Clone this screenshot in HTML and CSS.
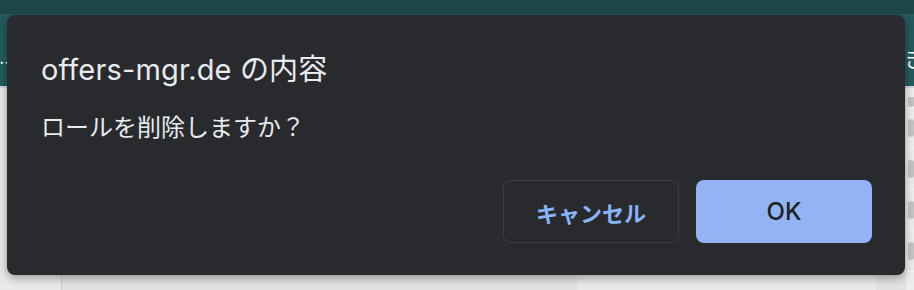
FILE: index.html
```html
<!DOCTYPE html>
<html lang="ja">
<head>
<meta charset="utf-8">
<title>offers-mgr.de の内容</title>
<link rel="stylesheet" href="styles.css">
</head>
<body>
<div class="page">
  <div class="topstrip"></div>
  <div class="header">
    <span class="dots">…</span>
    <span class="hchar">き</span>
  </div>
  <div class="content">
    <div class="leftcol"></div>
    <div class="midcol">
      <div class="panel"></div>
    </div>
    <div class="rightcol">
      <div class="row first"><span class="box"></span></div>
      <div class="row"><span class="box"></span></div>
      <div class="row"><span class="box"></span></div>
      <div class="row"><span class="box"></span></div>
      <div class="row"><span class="box"></span></div>
    </div>
  </div>
</div>

<div class="dialog">
  <div class="title">offers-mgr.de の内容</div>
  <div class="message">ロールを削除しますか？</div>
  <div class="actions">
    <button class="btn cancel">キャンセル</button>
    <button class="btn ok">OK</button>
  </div>
</div>
</body>
</html>
```
FILE: styles.css
```css
html, body {
  margin: 0;
  padding: 0;
}
body {
  width: 914px;
  height: 290px;
  overflow: hidden;
  position: relative;
  background: #e6e6e6;
  font-family: Inter, "Noto Sans CJK JP", sans-serif;
}
.page {
  display: flex;
  flex-direction: column;
  height: 290px;
}
.topstrip {
  height: 14px;
  background: #1e474c;
}
.header {
  height: 72px;
  background: #245a5e;
  display: flex;
  align-items: flex-start;
  justify-content: space-between;
  color: #ffffff;
  border-bottom: 2px solid #d6d6d6;
}
.dots {
  font-size: 18px;
  line-height: 20px;
  margin-top: 34px;
  margin-left: -6px;
}
.hchar {
  font-family: "Noto Sans CJK JP", sans-serif;
  font-size: 22px;
  line-height: 26px;
  margin-top: 30px;
  margin-right: -12px;
}
.content {
  flex: 1;
  display: flex;
  background: #e2e2e2;
}
.leftcol {
  width: 61px;
  background: #e9e9e9;
  border-right: 1px solid #cfcfcf;
}
.midcol {
  flex: 1;
  display: flex;
  justify-content: flex-end;
  padding-right: 30px;
}
.panel {
  width: 299px;
  background: #e9e9e9;
}
.rightcol {
  width: 8px;
  background: #ececec;
  display: flex;
  flex-direction: column;
}
.row {
  height: 41px;
  border-bottom: 1px solid #f6f6f6;
  display: flex;
  align-items: center;
  box-sizing: border-box;
}
.row.first {
  height: 20px;
  align-items: flex-end;
}
.box {
  display: block;
  width: 18px;
  height: 18px;
  margin-left: 2px;
  border-radius: 4px;
  background: #c4c4c4;
}
.row.first .box {
  height: 10px;
  border-radius: 0 0 4px 4px;
}

.dialog {
  position: absolute;
  left: 7px;
  top: 15px;
  width: 898px;
  height: 260px;
  box-sizing: border-box;
  padding: 37px 33px 32px 34px;
  background: #292a2d;
  border-radius: 8px;
  box-shadow: 0 3px 10px rgba(0, 0, 0, 0.35);
  display: flex;
  flex-direction: column;
}
.title {
  font-family: Inter, "Noto Sans CJK JP", sans-serif;
  font-size: 29px;
  line-height: 36px;
  color: #e8eaed;
  letter-spacing: 0.15px;
}
.message {
  font-family: "Noto Sans CJK JP", sans-serif;
  font-size: 24px;
  line-height: 32px;
  color: #e8eaed;
  margin-top: 22px;
}
.actions {
  margin-top: auto;
  display: flex;
  justify-content: flex-end;
  gap: 17px;
}
.btn {
  width: 176px;
  height: 63px;
  border-radius: 8px;
  font-family: Inter, "Noto Sans CJK JP", sans-serif;
  padding: 0;
  cursor: pointer;
}
.cancel {
  background: transparent;
  border: 1px solid #3d3e42;
  color: #8ab4f8;
  font-family: "Noto Sans CJK JP", sans-serif;
  font-weight: 700;
  font-size: 22px;
}
.ok {
  background: #93b4f4;
  border: none;
  color: #202124;
  font-size: 24px;
  font-weight: 500;
}
```
